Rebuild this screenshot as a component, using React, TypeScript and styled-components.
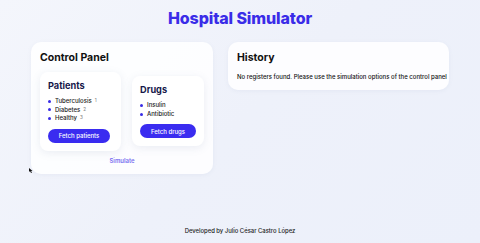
import React from "react";
import styled, { createGlobalStyle } from "styled-components";

const Global = createGlobalStyle`
  html, body { margin: 0; padding: 0; }
  body {
    font-family: Inter, "Open Sans", sans-serif;
    background: linear-gradient(135deg, #f4f6fc 0%, #eef1fa 50%, #ecf0fa 100%);
  }
  #root { min-height: 100vh; }
`;

const Page = styled.div`
  min-height: 100vh;
  display: flex;
  flex-direction: column;
  align-items: center;
  box-sizing: border-box;
`;

const Title = styled.h1`
  margin: 8px 0 0;
  font-size: 16px;
  line-height: 20px;
  font-weight: 800;
  color: #3a2ce8;
  letter-spacing: -0.1px;
`;

const Main = styled.main`
  display: flex;
  align-items: flex-start;
  gap: 15px;
  margin-top: 14px;
  width: 418px;
`;

const Panel = styled.section<{ $w: number }>`
  width: ${(p) => p.$w}px;
  box-sizing: border-box;
  background: rgba(255, 255, 255, 0.85);
  border-radius: 10px;
  padding: 9px 9px 9px;
  box-shadow: 0 1px 4px rgba(120, 130, 170, 0.08);
`;

const PanelTitle = styled.h2`
  margin: 0;
  font-size: 10.5px;
  line-height: 14px;
  font-weight: 700;
  color: #111;
`;

const Cards = styled.div`
  display: flex;
  align-items: center;
  gap: 11px;
  margin-top: 7px;
`;

const Card = styled.div<{ $w: number }>`
  width: ${(p) => p.$w}px;
  box-sizing: border-box;
  background: #fff;
  border-radius: 8px;
  padding: 7px 8px 8px;
  box-shadow: 0 2px 8px rgba(110, 120, 160, 0.13);
`;

const CardTitle = styled.h3`
  margin: 0;
  font-size: 9.2px;
  line-height: 14px;
  font-weight: 700;
  color: #17184a;
`;

const List = styled.ul`
  list-style: none;
  margin: 4px 0 0;
  padding: 0;
`;

const Item = styled.li`
  display: flex;
  align-items: center;
  font-size: 6px;
  line-height: 8.5px;
  font-weight: 500;
  color: #1a1a1a;
  &::before {
    content: "";
    width: 3px;
    height: 3px;
    border-radius: 50%;
    background: #3a2ce6;
    margin-right: 4px;
  }
`;

const Count = styled.span`
  color: #888;
  font-size: 4.5px;
  margin-left: 3px;
`;

const Button = styled.button<{ $w: number }>`
  display: block;
  width: ${(p) => p.$w}px;
  height: 14px;
  margin-top: 6px;
  border: none;
  border-radius: 8px;
  background: #3a2cf0;
  color: #fff;
  font-family: inherit;
  font-size: 6px;
  font-weight: 500;
  padding: 0;
  cursor: pointer;
`;

const Simulate = styled.div`
  text-align: center;
  margin-top: 6px;
  font-size: 6px;
  line-height: 8px;
  font-weight: 600;
  color: #7a6ff0;
`;

const Cursor = styled.div`
  height: 0;
  position: relative;
  svg { position: absolute; left: -11px; top: 3px; }
`;

const HistoryText = styled.p`
  margin: 8px 0 0;
  font-size: 6px;
  line-height: 8px;
  font-weight: 500;
  color: #111;
  white-space: nowrap;
`;

const Footer = styled.footer`
  margin-top: auto;
  padding-bottom: 9px;
  font-size: 5.9px;
  color: #222;
  font-weight: 500;
`;

export default function App() {
  return (
    <>
      <Global />
      <Page>
        <Title>Hospital Simulator</Title>
        <Main>
          <Panel $w={182}>
            <PanelTitle>Control Panel</PanelTitle>
            <Cards>
              <Card $w={82}>
                <CardTitle>Patients</CardTitle>
                <List>
                  <Item>Tuberculosis<Count>1</Count></Item>
                  <Item>Diabetes<Count>2</Count></Item>
                  <Item>Healthy<Count>3</Count></Item>
                </List>
                <Button $w={62}>Fetch patients</Button>
              </Card>
              <Card $w={72}>
                <CardTitle>Drugs</CardTitle>
                <List>
                  <Item>Insulin</Item>
                  <Item>Antibiotic</Item>
                </List>
                <Button $w={56}>Fetch drugs</Button>
              </Card>
            </Cards>
            <Simulate>Simulate</Simulate>
            <Cursor>
              <svg width="4" height="5" viewBox="0 0 4 5">
                <path d="M0 0 L0 4 L1 3 L2 5 L3 4.5 L2 3 L3.5 3 Z" fill="#111" />
              </svg>
            </Cursor>
          </Panel>
          <Panel $w={221}>
            <PanelTitle>History</PanelTitle>
            <HistoryText>
              No registers found. Please use the simulation options of the control panel
            </HistoryText>
          </Panel>
        </Main>
        <Footer>Developed by Julio César Castro López</Footer>
      </Page>
    </>
  );
}
